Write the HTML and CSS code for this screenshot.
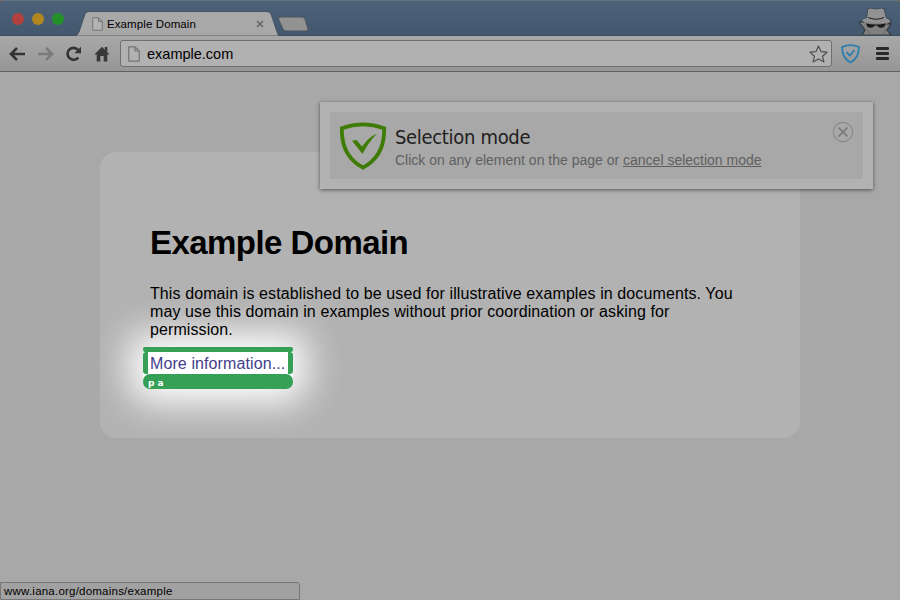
FILE: index.html
```html
<!DOCTYPE html>
<html lang="en">
<head>
<meta charset="utf-8">
<title>Example Domain</title>
<link rel="stylesheet" href="styles.css">
</head>
<body>
<div class="browser">
  <header class="titlebar">
    <div class="lights"><i class="red"></i><i class="yellow"></i><i class="green"></i></div>
    <div class="tab">
      <svg class="tab-shape" width="204" height="25" viewBox="0 0 204 25"><path d="M0 25Q3 24 4 21L10 3Q11 .5 14 .5H191Q195 .5 196 3L202 21Q203 24 204 25Z" fill="#a8a8a8" stroke="#3c4a59" stroke-width=".8"/></svg>
      <svg class="doc" width="11" height="14" viewBox="0 0 11 14"><path d="M.7.7H6.5L10.3 4.5V13.3H.7ZM6.5.7V4.5H10.3" fill="#b2b2b2" stroke="#777"/></svg>
      <span class="tab-title">Example Domain</span>
      <svg class="tab-close" width="8" height="8" viewBox="0 0 8 8"><path d="M1 1L7 7M7 1L1 7" stroke="#646464" stroke-width="1.5"/></svg>
    </div>
    <svg class="new-tab" width="32" height="16" viewBox="0 0 32 16"><path d="M3 1H25Q27 1 28 3L31 13Q31 15 29 15H9Q7 15 6 13L1.500 3Q1 1 3 1Z" fill="#929292" stroke="#4b5560"/></svg>
    <svg class="incognito" width="36" height="28" viewBox="0 0 36 28">
      <path d="M9 11L10 3Q10 1 13 1.500L18 2.500L23 1.500Q26 1 26 3L28 11Q34 13 33 15L30 17H33L29 23L33 28H4L7 23L1 15H5L4 14Q4 12 9 11Z" fill="#808080" stroke="#303a46" stroke-width="1.200"/>
      <path d="M10 3Q10 1 13 1.500L18 2.500L23 1.500Q26 1 26 3L28 11Q33 13 32 15Q18 18 4 14Q4 12 9 11Z" fill="#929292"/>
      <path d="M10 10Q18 13.500 26 10V11Q18 14.500 10 11Z" fill="#222"/>
      <path d="M8 16.500Q18 18.500 28 16.500L26 20Q21 22 19 18.500H17Q14 22 9.500 20Z" fill="#191919"/>
      <path d="M9 23L14 28M28 23L24 28" stroke="#666"/>
    </svg>
  </header>
  <nav class="toolbar">
    <svg class="back" width="17" height="14" viewBox="0 0 17 14"><path d="M8 1L2 7L8 13M2 7H16" fill="none" stroke="#333" stroke-width="2.600"/></svg>
    <svg class="forward" width="17" height="14" viewBox="0 0 17 14"><path d="M9 1L15 7L9 13M15 7H1" fill="none" stroke="#7b7b7b" stroke-width="2.600"/></svg>
    <svg class="reload" width="17" height="16" viewBox="0 0 17 16"><path d="M13.300 11.500A6 6 0 1 1 13 3.800" fill="none" stroke="#333" stroke-width="2.600"/><path d="M16 .8V7.300H9.300Z" fill="#333"/></svg>
    <svg class="home" width="16" height="16" viewBox="0 0 16 16"><path d="M8 .8L10.800 3.700V1H13.300V6.200L15.600 8.600H13.300V15.500H9.700V10H6.300V15.500H2.700V8.600H.4Z" fill="#383838"/></svg>
    <div class="address">
      <svg class="doc" width="12" height="16" viewBox="0 0 12 16"><path d="M.8.8H7L11.200 5V15.200H.8ZM7 .8V5H11.200" fill="#b2b2b2" stroke="#727272" stroke-width="1.200"/></svg>
      <span class="url">example.com</span>
      <svg class="star" width="19" height="18" viewBox="0 0 19 18"><path d="M9.500 1L12 6.600L18 7.200L13.500 11.200L14.900 17L9.500 13.900L4.100 17L5.500 11.200L1 7.200L7 6.600Z" fill="none" stroke="#505050" stroke-width="1.200" stroke-linejoin="round"/></svg>
    </div>
    <svg class="shield-small" width="19" height="20" viewBox="0 0 19 20"><path d="M1.200 2.800Q9.500 -.5 17.800 2.800Q18.300 13.500 9.500 18.500Q.7 13.500 1.200 2.800Z" fill="none" stroke="#2f7fae" stroke-width="1.900"/><path d="M5.500 8.200L8.800 11.500L13.500 6" fill="none" stroke="#2f7fae" stroke-width="1.900"/></svg>
    <div class="menu"><i></i><i></i><i></i></div>
  </nav>
  <main class="page">
    <article class="card">
      <h1>Example Domain</h1>
      <p>This domain is established to be used for illustrative examples in documents. You<br>may use this domain in examples without prior coordination or asking for<br>permission.</p>
      <div class="selected">
        <div class="edge-top"></div>
        <div class="picked"><a>More information...</a></div>
        <div class="edge-label">p a</div>
      </div>
    </article>
    <aside class="notice">
      <div class="notice-body">
        <svg class="shield" width="46" height="49" viewBox="0 0 46 49"><path d="M1.900 6.200Q23 -1.500 44.100 6.200C44.800 25 38 37.500 23 45.700C8 37.500 1.200 25 1.900 6.200Z" fill="none" stroke="#3f7c06" stroke-width="3.800"/><path d="M12 18.800L16.500 18L22 24.500Q29 15 37 11.500Q29 19.500 22.500 32Z" fill="#3f7c06"/></svg>
        <div class="message"><div class="headline">Selection mode</div><div class="hint">Click on any element on the page or <u>cancel selection mode</u></div></div>
        <svg class="dismiss" width="22" height="22" viewBox="0 0 22 22"><circle cx="11" cy="11" r="9.700" fill="none" stroke="#8b8b8b" stroke-width="1.200"/><path d="M6.500 6.500L15.500 15.500M15.500 6.500L6.500 15.500" stroke="#777" stroke-width="1.700"/></svg>
      </div>
    </aside>
    <div class="status">www.iana.org/domains/example</div>
  </main>
</div>
</body>
</html>
```
FILE: styles.css
```css
* { box-sizing: border-box; }
body { margin: 0; font-family: "Liberation Sans", Arial, sans-serif; color: #000; background: #7d6a5b; }
svg { display: block; flex: none; }
.browser { width: 900px; height: 600px; display: flex; flex-direction: column; overflow: hidden; border-radius: 4px 4px 0 0; }
.titlebar { height: 36px; flex: none; display: flex; align-items: flex-end; background: linear-gradient(#4c6278, #43586f); border-top: 1px solid #63717e; border-bottom: 1px solid #3e4b59; }
.lights { display: flex; gap: 8px; padding-left: 12px; width: 75px; align-self: flex-start; margin-top: 12px; }
.lights i { width: 12px; height: 12px; border-radius: 50%; }
.red { background: #b3413d; }
.yellow { background: #b38720; }
.green { background: #239029; }
.tab { width: 200px; height: 25px; display: flex; align-items: center; padding: 0 11px 0 17px; position: relative; margin-bottom: -1px; }
.tab-shape { position: absolute; left: 0; top: 0; }
.tab .doc, .tab-title, .tab-close { position: relative; }
.tab-title { font-size: 11.5px; letter-spacing: .1px; line-height: 14px; margin-left: 4px; flex: 1; white-space: nowrap; }
.new-tab { margin: 0 0 3px 2px; }
.incognito { margin-left: auto; margin-right: 6px; }
.toolbar { height: 36px; flex: none; display: flex; align-items: center; padding-left: 9px; background: linear-gradient(#a8a8a8, #969696); border-bottom: 1px solid #606060; }
.forward { margin-left: 11px; }
.reload { margin-left: 11px; }
.home { margin-left: 12px; }
.address { margin-left: 10px; width: 712px; height: 27px; background: #b1b1b1; border: 1px solid #707070; border-radius: 3px; display: flex; align-items: center; padding: 0 3px 0 7px; }
.url { font-size: 14.5px; margin-left: 7px; flex: 1; }
.shield-small { margin-left: 9px; }
.menu { width: 13px; display: flex; flex-direction: column; gap: 2px; margin-left: 16px; }
.menu i { height: 3px; border-radius: 1px; background: #292929; }
.page { flex: 1; position: relative; background: #a8a8a8; padding: 80px 100px 0; }
.card { height: 286px; border-radius: 16px; background: #b2b2b2; padding: 72px 43px 0 50px; }
h1 { font-size: 33px; letter-spacing: -.55px; line-height: 38px; margin: 0; white-space: nowrap; }
p { font-size: 16px; letter-spacing: .1px; line-height: 18px; margin: 23px 0 8px; white-space: nowrap; position: relative; z-index: 1; }
.selected { width: 150px; margin-left: -7px; background: #fff; border-radius: 4px 4px 9px 9px; box-shadow: 0 0 36px 14px #fff; }
.edge-top { height: 5px; border-radius: 2px; background: #36a057; }
.picked { height: 22px; border: solid #36a057; border-width: 0 5px; border-radius: 3px; padding-left: 2px; font-size: 16px; letter-spacing: .1px; line-height: 24px; color: #443d8b; white-space: nowrap; }
.edge-label { height: 15px; border-radius: 7px; background: #36a057; color: #fff; font: bold 9px/18px "DejaVu Sans", sans-serif; padding-left: 5px; }
.notice { position: absolute; left: 320px; top: 30px; width: 553px; height: 87px; padding: 10px; background: #b2b2b2; box-shadow: 0 1px 4px #0008; }
.notice-body { height: 67px; background: #a8a8a8; display: flex; padding: 10px 9px 0 10px; }
.message { margin-left: 9px; flex: 1; white-space: nowrap; }
.headline { font: 20px/24px "DejaVu Sans Condensed", "DejaVu Sans", sans-serif; font-stretch: condensed; letter-spacing: -.32px; color: #202020; margin-top: 3px; }
.hint { font-size: 14px; line-height: 18px; margin-top: 2px; color: #606060; }
.dismiss { margin-top: -1px; }
.status { position: absolute; left: 0; bottom: 0; width: 300px; height: 18px; border: 1px solid #777; border-radius: 0 3px 0 0; background: #a1a1a1; padding-left: 3px; font-size: 11.5px; letter-spacing: .22px; line-height: 16px; }
```
